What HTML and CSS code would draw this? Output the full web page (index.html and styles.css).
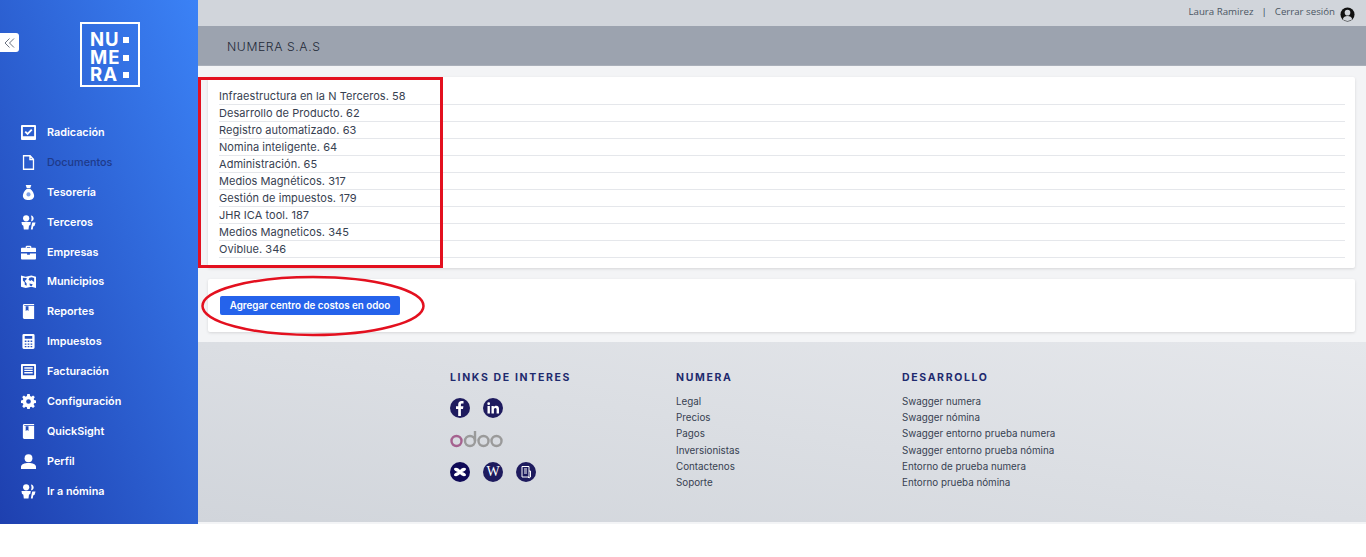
FILE: index.html
```html
<!DOCTYPE html>
<html lang="es">
<head>
<meta charset="utf-8">
<title>Numera</title>
<link rel="stylesheet" href="styles.css">
</head>
<body>
<div class="app">
  <aside class="sidebar">
    <button class="collapse" aria-label="Colapsar"><svg width="11" height="10" viewBox="0 0 11 10" fill="none" stroke="#6b7280" stroke-width="1"><path d="M5.500 .5 1 5l4.500 4.500M10 .5 5.500 5l4.500 4.500"/></svg></button>
    <div class="logo">
      <div class="logo-row"><span>NU</span><i></i></div>
      <div class="logo-row"><span>ME</span><i></i></div>
      <div class="logo-row"><span>RA</span><i></i></div>
    </div>
    <nav class="nav">
      <a class="nav-item"><svg class="nav-icon" viewBox="0 0 16 16"><path fill="#fff" fill-rule="evenodd" d="M1 0h14a1 1 0 0 1 1 1v14a1 1 0 0 1-1 1H1a1 1 0 0 1-1-1V1a1 1 0 0 1 1-1zm1 2v10h12V2z"/><path fill="none" stroke="#fff" stroke-width="2" d="m4.500 7 2.500 2.500 4.500-4.500"/></svg>Radicación</a>
      <a class="nav-item is-muted"><svg class="nav-icon" viewBox="0 0 16 16"><path fill="none" stroke="#fff" stroke-width="1.400" d="M2.700.8h7l3.600 3.700v10.700H2.700zM9.500.8v4h3.800"/></svg>Documentos</a>
      <a class="nav-item"><svg class="nav-icon" viewBox="0 0 16 16"><path fill="#fff" d="M5 0h6L9.800 3.500H6.200zM6 4.200h4c2.500 2 4 5 4 7.300 0 3-2.500 4.500-6 4.500s-6-1.500-6-4.500c0-2.300 1.500-5.300 4-7.300z"/><circle cx="8" cy="10" r="2.200" fill="#7ea2ea"/></svg>Tesorería</a>
      <a class="nav-item"><svg class="nav-icon" viewBox="0 0 16 16"><use href="#people"/></svg>Terceros</a>
      <a class="nav-item"><svg class="nav-icon" viewBox="0 0 16 16"><path fill="#fff" fill-rule="evenodd" d="M5 3V1.500L6 .8h4l1 .7V3h4a1 1 0 0 1 1 1v3.500H0V4a1 1 0 0 1 1-1zm1.300 0h3.400V2H6.300zM0 9h6.500v1.500h3V9H16v5.500a1 1 0 0 1-1 1H1a1 1 0 0 1-1-1z"/></svg>Empresas</a>
      <a class="nav-item"><svg class="nav-icon" viewBox="0 0 16 16"><path fill="#fff" fill-rule="evenodd" d="M0 1.500 5 3l6-1.500L16 3v12l-5-1.500L5 15l-5-1.500zM2 4v3l2 2v2.500l2 1V10L4 7.500l2-2V4.200zM9 4l-1 2 2 1.500 1-1 3 2V4.200L11.500 3.400zM9 10l.5 2.500 2 .3 1-1.800z"/></svg>Municipios</a>
      <a class="nav-item"><svg class="nav-icon" viewBox="0 0 16 16"><use href="#book"/></svg>Reportes</a>
      <a class="nav-item"><svg class="nav-icon" viewBox="0 0 16 16"><path fill="#fff" fill-rule="evenodd" d="M3 0h10a1.500 1.500 0 0 1 1.500 1.500v13A1.500 1.500 0 0 1 13 16H3a1.500 1.500 0 0 1-1.500-1.500v-13A1.500 1.500 0 0 1 3 0zm1 2v3h8V2zm0 5v1.500h1.800V7zm3.100 0v1.500h1.800V7zm3.100 0v1.500H12V7zM4 10v1.500h1.800V10zm3.100 0v1.500h1.800V10zm3.100 0v1.500H12V10zM4 12.800v1.400h1.800v-1.400zm3.100 0v1.400h1.800v-1.400zm3.100 0v1.400H12v-1.400z"/></svg>Impuestos</a>
      <a class="nav-item"><svg class="nav-icon" viewBox="0 0 16 16"><path fill="#fff" fill-rule="evenodd" d="M1 0h14a1 1 0 0 1 1 1v14a1 1 0 0 1-1 1H1a1 1 0 0 1-1-1V1a1 1 0 0 1 1-1zm1 2v10h12V2z"/><path fill="#fff" d="M3.500 3.500h9v1.500h-9zm0 2.500h9v1.500h-9zm0 2.500h9V10h-9z"/></svg>Facturación</a>
      <a class="nav-item"><svg class="nav-icon" viewBox="0 0 16 16"><path fill="#fff" fill-rule="evenodd" d="M6.700 0h2.600l.4 2.200 1.300.6 1.900-1.300 1.800 1.800-1.200 1.900.5 1.300 2 .4v2.600l-2 .4-.5 1.300 1.200 1.900-1.800 1.800-1.900-1.300-1.300.6-.4 2.200H6.700l-.4-2.200-1.300-.6-1.900 1.300-1.800-1.800 1.200-1.900-.5-1.300-2-.4V6.900l2-.4.5-1.300-1.200-1.900 1.800-1.800 1.900 1.300 1.300-.6zM8 5.500a2.500 2.500 0 1 0 0 5 2.500 2.500 0 0 0 0-5z"/></svg>Configuración</a>
      <a class="nav-item"><svg class="nav-icon" viewBox="0 0 16 16"><use href="#book"/></svg>QuickSight</a>
      <a class="nav-item"><svg class="nav-icon" viewBox="0 0 16 16"><circle cx="8" cy="4.500" r="4.200" fill="#fff"/><path fill="#fff" d="M0 16v-2.500C0 11 3.500 9.500 8 9.500s8 1.500 8 4V16z"/></svg>Perfil</a>
      <a class="nav-item"><svg class="nav-icon" viewBox="0 0 16 16"><use href="#people"/></svg>Ir a nómina</a>
    </nav>
  </aside>

  <main class="main">
    <header class="topbar"><span class="top-text">Laura Ramirez</span><span class="top-text sep">|</span><span class="top-text">Cerrar sesión</span>
      <svg class="user" viewBox="0 0 16 16"><circle cx="8" cy="8" r="7.500" fill="#111"/><circle cx="8" cy="6" r="3" fill="#d1d5db"/><path fill="#d1d5db" d="M3 13c.5-2.500 2.500-3.500 5-3.500s4.500 1 5 3.500c-1.300 1.200-3 1.800-5 1.800s-3.700-.6-5-1.800z"/></svg>
    </header>
    <div class="titlebar">NUMERA S.A.S</div>
    <section class="content">
      <div class="card card-list">
        <ul class="list">
          <li>Infraestructura en la N Terceros. 58</li>
          <li>Desarrollo de Producto. 62</li>
          <li>Registro automatizado. 63</li>
          <li>Nomina inteligente. 64</li>
          <li>Administración. 65</li>
          <li>Medios Magnéticos. 317</li>
          <li>Gestión de impuestos. 179</li>
          <li>JHR ICA tool. 187</li>
          <li>Medios Magneticos. 345</li>
          <li>Oviblue. 346</li>
        </ul>
      </div>
      <div class="card card-action"><button class="btn">Agregar centro de costos en odoo</button></div>
    </section>
    <footer class="footer">
      <div class="col">
        <h4>LINKS DE INTERES</h4>
        <div class="socials">
          <span class="social"><svg viewBox="0 0 20 20"><path fill="#fff" d="M8.200 18V11H6V8.300h2.200V6.500C8.200 4.200 9.500 3 11.500 3h2v2.600h-1.300c-1 0-1.300.5-1.300 1.200v1.500h2.500L13 11h-2.100v7z"/></svg></span>
          <span class="social"><svg viewBox="0 0 20 20"><path fill="#fff" d="M4.500 8h2.400v7.500H4.500zM5.700 4.300a1.400 1.400 0 1 1 0 2.800 1.400 1.400 0 0 1 0-2.800zM8.500 8h2.300v1c.5-.8 1.400-1.200 2.400-1.200 2.200 0 2.800 1.400 2.800 3.400v4.300h-2.400v-3.800c0-1-.2-1.800-1.200-1.800s-1.500.8-1.500 1.800v3.800H8.500z"/></svg></span>
        </div>
        <svg class="odoo" width="54" height="18" viewBox="0 0 54 18" fill="none" stroke-width="2.400"><circle cx="6.500" cy="11" r="5" stroke="#a5628f"/><circle cx="20" cy="11" r="5" stroke="#9a9a9a"/><path stroke="#9a9a9a" d="M25 1v10"/><circle cx="33.500" cy="11" r="5" stroke="#9a9a9a"/><circle cx="46.500" cy="11" r="5" stroke="#9a9a9a"/></svg>
        <div class="socials">
          <span class="social social-dark"><svg viewBox="0 0 20 20"><path fill="#fff" d="M4 6.500c2-1.500 4-.5 6 1.500 2-2 4-3 6-1.500.4 1.800-2 3-4 3.500 2 .5 4.400 1.700 4 3.500-2 1.500-4 .5-6-1.500-2 2-4 3-6 1.500-.4-1.800 2-3 4-3.500-2-.5-4.400-1.700-4-3.500z"/></svg></span>
          <span class="social social-w">W</span>
          <span class="social"><svg viewBox="0 0 20 20" fill="none" stroke="#fff" stroke-width="1"><path d="M6 4.500h7v10.500H6zM8 7h3M8 9h3M8 11h3M13 9h1.500v6l-1.500 1-1-1"/></svg></span>
        </div>
      </div>
      <div class="col">
        <h4>NUMERA</h4>
        <ul class="links">
          <li>Legal</li><li>Precios</li><li>Pagos</li><li>Inversionistas</li><li>Contactenos</li><li>Soporte</li>
        </ul>
      </div>
      <div class="col">
        <h4>DESARROLLO</h4>
        <ul class="links">
          <li>Swagger numera</li><li>Swagger nómina</li><li>Swagger entorno prueba numera</li><li>Swagger entorno prueba nómina</li><li>Entorno de prueba numera</li><li>Entorno prueba nómina</li>
        </ul>
      </div>
    </footer>
    <div class="footer-edge"></div>
  </main>

  <div class="mark-rect"></div>
  <svg class="mark-ellipse" width="226" height="64" viewBox="0 0 226 64"><ellipse cx="113" cy="32" rx="110.500" ry="29" fill="none" stroke="#e3101f" stroke-width="2.500"/></svg>
</div>

<svg class="defs" width="0" height="0">
  <symbol id="people" viewBox="0 0 16 16"><circle cx="5.500" cy="3.500" r="3.300" fill="#fff"/><path fill="#fff" d="M.5 7.500h10l-.5 3-1.500 1-.5 4H3l-.5-4-1.500-1zM10.500 .5c2 .3 3 1.500 3 3.200s-1 2.800-3 3.100c1-1.900 1-4.400 0-6.300zM12 8h3.500l-1 3.500-1.500.8-.5 3.200h-2l.8-4.500z"/></symbol>
  <symbol id="book" viewBox="0 0 16 16"><path fill="#fff" fill-rule="evenodd" d="M2 1.500C2 .7 2.700 0 3.500 0H14v1.300H3.500V2H14v14H3.500C2.700 16 2 15.300 2 14.500zM5 2.500v5l1.500-1 1.500 1v-5z"/></symbol>
</svg>
</body>
</html>
```
FILE: styles.css
```css
* { box-sizing: border-box; }
html, body { margin: 0; padding: 0; background: #fff; overflow: hidden; }
body { font-family: Inter, "Liberation Sans", sans-serif; height: 557px; }
.app { display: flex; height: 524px; position: relative; }
.defs { position: absolute; }

.sidebar { width: 198px; flex: none; position: relative; background: linear-gradient(to top right, #1e40af, #3b82f6); padding-top: 22px; }
.collapse { position: absolute; left: 0; top: 33px; width: 19px; height: 19px; border: 0; padding: 0; background: #fff; border-radius: 0 3px 3px 0; display: flex; align-items: center; justify-content: center; }
.logo { width: 60px; height: 65px; margin-left: 80px; border: 2px solid #fff; padding: 7px 0 0 8px; color: #fff; font: 700 18.500px/17.700px Inter, sans-serif; }
.logo-row { display: flex; align-items: center; justify-content: space-between; padding-right: 9px; letter-spacing: 1px; }
.logo-row i { width: 6px; height: 6px; background: #fff; }
.nav { display: flex; flex-direction: column; margin-top: 30.500px; }
.nav-item { height: 29.900px; display: flex; align-items: center; gap: 11px; padding-left: 21px; color: #fff; font-size: 10.800px; font-weight: 600; }
.nav-item.is-muted { color: #1e3a8a; font-weight: 500; }
.nav-icon { width: 15px; height: 15px; flex: none; }

.main { flex: 1; min-width: 0; display: flex; flex-direction: column; }
.topbar { height: 26px; flex: none; background: #d1d5db; display: flex; align-items: center; justify-content: flex-end; padding: 0 11px 0 0; font: 9.700px "Open Sans", sans-serif; color: #4b5563; }
.top-text { margin-bottom: 3px; }
.topbar .sep { margin: 0 8px 3px; color: #374151; }
.user { width: 15px; height: 15px; margin-left: 5px; margin-top: 2px; }
.titlebar { height: 40px; flex: none; background: #9ca3af; display: flex; align-items: center; padding: 1px 0 0 29px; font-size: 12.200px; font-weight: 300; color: #1f2937; letter-spacing: .6px; border-bottom: 1px solid #a9afb9; }
.content { height: 276px; flex: none; background: #f3f4f6; padding: 11px 11px 0 10px; display: flex; flex-direction: column; gap: 11px; }
.card { background: #fff; border-radius: 2px; box-shadow: 0 1px 3px rgba(0,0,0,.12); }
.card-list { height: 191px; padding: 11px 10px 0 11px; }
.list { list-style: none; margin: 0; padding: 0; }
.list li { height: 17px; border-bottom: 1px solid #e5e7eb; font-size: 11px; line-height: 16px; letter-spacing: .05px; color: #374151; }
.card-action { height: 53px; padding: 17px 0 0 12px; }
.btn { display: block; width: 180px; height: 19px; border: 0; border-radius: 2px; background: #2563eb; color: #fff; font: 600 9.800px Inter, sans-serif; padding: 0; }

.footer { height: 180px; flex: none; background: linear-gradient(to top right, #d1d5db, #e5e7eb); display: grid; grid-template-columns: 226px 226px 226px; padding: 29px 0 0 252px; }
.col h4 { margin: 0; font-size: 10.500px; line-height: 13px; font-weight: 700; letter-spacing: 1.650px; color: #1e2a6e; }
.socials { display: flex; gap: 13px; margin-top: 14px; }
.social { width: 20px; height: 20px; border-radius: 50%; background: #1e1b5e; display: block; }
.social svg { display: block; width: 20px; height: 20px; }
.social-dark { background: #0f0a57; }
.social-w { color: #fff; font: 14px/20px "Liberation Serif", serif; text-align: center; }
.odoo { display: block; margin-top: 12px; }
.odoo + .socials { margin-top: 14px; }
.links { list-style: none; margin: 10px 0 0; padding: 0; }
.links li { height: 16.200px; font-size: 9.800px; line-height: 16px; color: #374151; }
.footer-edge { height: 2px; flex: none; background: #f3f4f6; }

.mark-rect { position: absolute; left: 198px; top: 77px; width: 245px; height: 191px; border: 3px solid #e3101f; pointer-events: none; }
.mark-ellipse { position: absolute; left: 200px; top: 274px; pointer-events: none; }
```
